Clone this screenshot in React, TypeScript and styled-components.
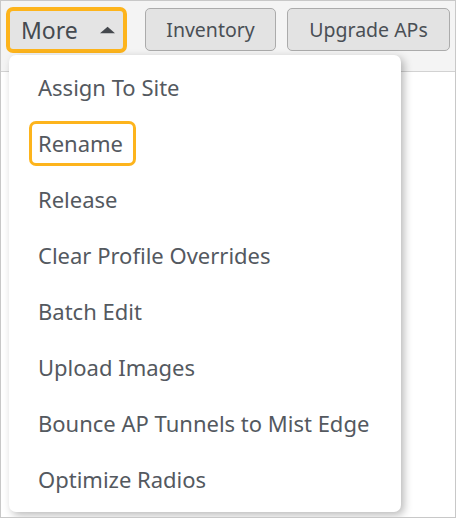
import styled, { createGlobalStyle } from 'styled-components';

const GlobalStyle = createGlobalStyle`
  html, body {
    margin: 0;
    padding: 0;
    background: #ffffff;
  }
  body {
    font-family: 'Noto Sans', 'Open Sans', sans-serif;
  }
`;

const Frame = styled.div`
  position: relative;
  box-sizing: border-box;
  width: 456px;
  height: 518px;
  border: 1px solid #c8c8c8;
  background: #ffffff;
  overflow: hidden;
`;

const Toolbar = styled.div`
  display: flex;
  align-items: flex-start;
  gap: 11px;
  height: 71px;
  box-sizing: border-box;
  padding: 6px 0 0 5px;
  background: #f4f4f4;
  border-bottom: 1px solid #d2d2d2;
`;

const MoreButton = styled.button<{ $active?: boolean }>`
  display: flex;
  align-items: center;
  gap: 22px;
  flex-shrink: 0;
  box-sizing: border-box;
  height: 46px;
  width: 121px;
  margin-right: 7px;
  padding: 0 8px 0 11px;
  font-family: inherit;
  font-size: 23px;
  color: #454a50;
  background: #e4e4e4;
  border: 4px solid ${(p) => (p.$active ? '#fdb41c' : '#aaaaaa')};
  border-radius: 7px;
`;

const Button = styled.button<{ $width: number }>`
  flex-shrink: 0;
  box-sizing: border-box;
  width: ${(p) => p.$width}px;
  height: 43px;
  margin-top: 1px;
  padding: 0;
  white-space: nowrap;
  font-family: inherit;
  font-size: 19.5px;
  color: #4a4f55;
  background: #e3e3e3;
  border: 1px solid #ababab;
  border-radius: 5px;
`;

const Caret = () => (
  <svg width='16' height='8' viewBox='0 0 16 8'>
    <path d='M0 7.5 L8 0.5 L16 7.5 Z' fill='#44484d' />
  </svg>
);

const Menu = styled.div`
  position: absolute;
  left: 8px;
  top: 54px;
  width: 392px;
  height: 457px;
  box-sizing: border-box;
  padding-top: 4px;
  background: #ffffff;
  border-radius: 7px;
  box-shadow: 3px 3px 9px rgba(0, 0, 0, 0.28);
  display: flex;
  flex-direction: column;
`;

const Item = styled.div`
  display: flex;
  align-items: center;
  height: 56.1px;
  padding-left: 20px;
  font-size: 22px;
  color: #54595f;
`;

const Label = styled.span<{ $highlight?: boolean }>`
  display: inline-block;
  line-height: 28px;
  padding: 5px 10px 6px 6px;
  border: 3.5px solid ${(p) => (p.$highlight ? '#fdb41c' : 'transparent')};
  border-radius: 7px;
`;

const items = [
  'Assign To Site',
  'Rename',
  'Release',
  'Clear Profile Overrides',
  'Batch Edit',
  'Upload Images',
  'Bounce AP Tunnels to Mist Edge',
  'Optimize Radios',
];

export default function App() {
  return (
    <>
      <GlobalStyle />
      <Frame>
        <Toolbar>
          <MoreButton $active>
            More
            <Caret />
          </MoreButton>
          <Button $width={131}>Inventory</Button>
          <Button $width={163}>Upgrade APs</Button>
        </Toolbar>
        <Menu>
          {items.map((name) => (
            <Item key={name}>
              <Label $highlight={name === 'Rename'}>{name}</Label>
            </Item>
          ))}
        </Menu>
      </Frame>
    </>
  );
}
